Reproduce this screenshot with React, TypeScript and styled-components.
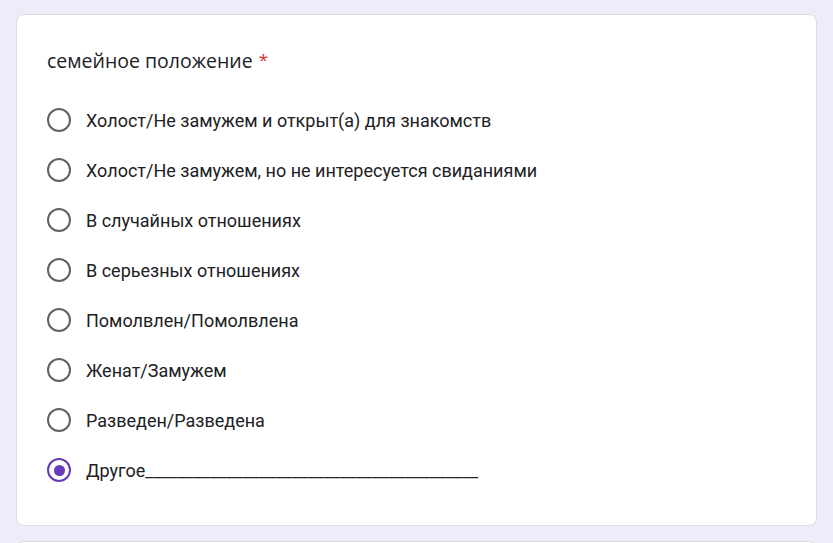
import React from 'react';
import styled, { createGlobalStyle } from 'styled-components';

const GlobalStyle = createGlobalStyle`
  html, body {
    margin: 0;
    background: #f0ebf8;
  }
  body {
    font-family: Roboto, 'Liberation Sans', sans-serif;
    color: #202124;
  }
`;

const Page = styled.div`
  display: flex;
  flex-direction: column;
  gap: 15px;
  padding: 14px 16px 0 16px;
  height: 543px;
  box-sizing: border-box;
  overflow: hidden;
`;

const Card = styled.div`
  background: #fff;
  border: 1px solid #dadce0;
  border-radius: 8px;
  padding: 33px 30px 30px 30px;
  flex-shrink: 0;
`;

const Title = styled.div`
  font-family: 'Open Sans', sans-serif;
  font-size: 19.5px;
  line-height: 24px;
  color: #202124;
  margin-bottom: 22px;
`;

const Required = styled.span`
  color: #d93025;
  font-size: 17px;
  margin-left: 6px;
  vertical-align: 2px;
`;

const Options = styled.div`
  display: flex;
  flex-direction: column;
`;

const Row = styled.label`
  display: flex;
  align-items: center;
  height: 50px;
  gap: 15px;
  font-size: 18px;
  color: #202124;
`;

const Radio = styled.span<{ $checked?: boolean }>`
  width: 20px;
  height: 20px;
  border-radius: 50%;
  border: 2px solid ${p => (p.$checked ? '#673ab7' : '#5f6368')};
  display: flex;
  align-items: center;
  justify-content: center;
  flex-shrink: 0;
  &::after {
    content: '';
    display: ${p => (p.$checked ? 'block' : 'none')};
    width: 11px;
    height: 11px;
    border-radius: 50%;
    background: #673ab7;
  }
`;

const NextCard = styled.div`
  background: #fff;
  border: 1px solid #dadce0;
  border-radius: 8px;
  height: 100px;
  flex-shrink: 0;
`;

const options = [
  'Холост/Не замужем и открыт(а) для знакомств',
  'Холост/Не замужем, но не интересуется свиданиями',
  'В случайных отношениях',
  'В серьезных отношениях',
  'Помолвлен/Помолвлена',
  'Женат/Замужем',
  'Разведен/Разведена',
  'Другое_________________________________________',
];

const App = () => (
  <>
    <GlobalStyle />
    <Page>
      <Card>
        <Title>
          семейное положение<Required>*</Required>
        </Title>
        <Options>
          {options.map((o, i) => (
            <Row key={i}>
              <Radio $checked={i === options.length - 1} />
              {o}
            </Row>
          ))}
        </Options>
      </Card>
      <NextCard />
    </Page>
  </>
);

export default App;
